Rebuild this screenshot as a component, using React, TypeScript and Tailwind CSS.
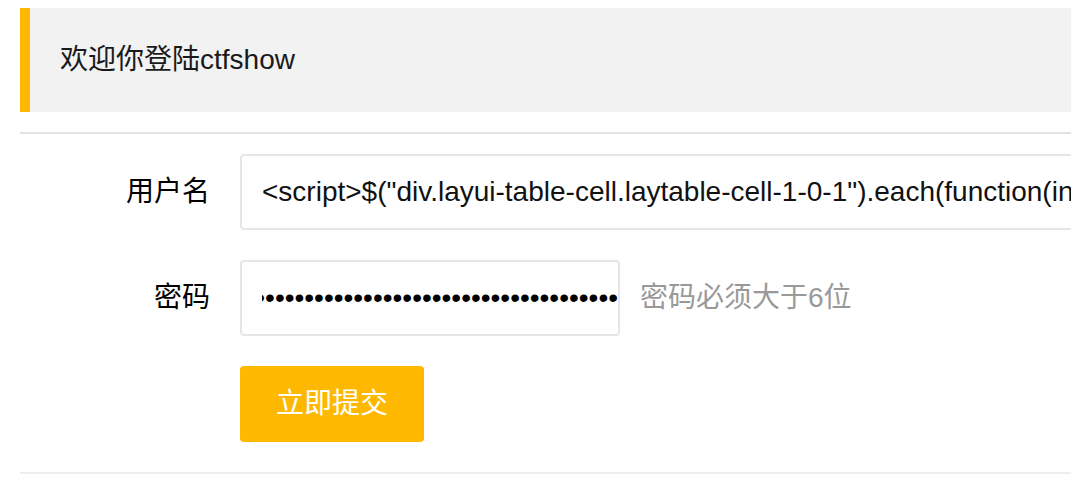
export default function App() {
  const dots = '•'.repeat(60);

  return (
    <div className="h-[483px] w-[1071px] overflow-hidden bg-white pl-5 pt-2 font-['Liberation_Sans','Noto_Sans_CJK_SC',sans-serif]">
      {/* Welcome quote */}
      <div className="flex h-[104px] items-center border-l-[10px] border-[#FFB800] bg-[#f2f2f2] pl-[30px] text-[28px] leading-[44px] text-[#1a1a1a]">
        欢迎你登陆ctfshow
      </div>

      <div className="mt-5 h-[2px] bg-[#e2e2e2]" />

      <form className="mt-5" onSubmit={(e) => e.preventDefault()}>
        {/* Username */}
        <div className="flex h-[76px] items-center">
          <label className="w-[220px] shrink-0 pr-[30px] text-right text-[28px] text-black">用户名</label>
          <div className="flex h-[76px] w-[1000px] shrink-0 items-center overflow-hidden whitespace-nowrap rounded-[4px] border-2 border-[#e6e6e6] pl-5 text-[28px] text-[#111]">
            {'<script>$("div.layui-table-cell.laytable-cell-1-0-1").each(function(index,val){$(val).text()})</script>'}
          </div>
        </div>

        {/* Password */}
        <div className="mt-[30px] flex h-[76px] items-center">
          <label className="w-[220px] shrink-0 pr-[30px] text-right text-[28px] text-black">密码</label>
          <div className="flex h-[76px] w-[380px] shrink-0 items-center rounded-[4px] border-2 border-[#e6e6e6] pl-5">
            <div className="flex min-w-0 flex-1 justify-end overflow-hidden whitespace-nowrap text-[28px] text-black">
              <span className="shrink-0">{dots}</span>
            </div>
          </div>
          <span className="ml-5 text-[28px] text-[#999]">密码必须大于6位</span>
        </div>

        {/* Submit */}
        <div className="mt-[30px] flex">
          <div className="w-[220px] shrink-0" />
          <button
            type="submit"
            className="h-[76px] rounded-[4px] bg-[#FFB800] px-9 text-[28px] text-white"
          >
            立即提交
          </button>
        </div>
      </form>

      <div className="mt-[30px] h-[2px] bg-[#eeeeee]" />
    </div>
  );
}
